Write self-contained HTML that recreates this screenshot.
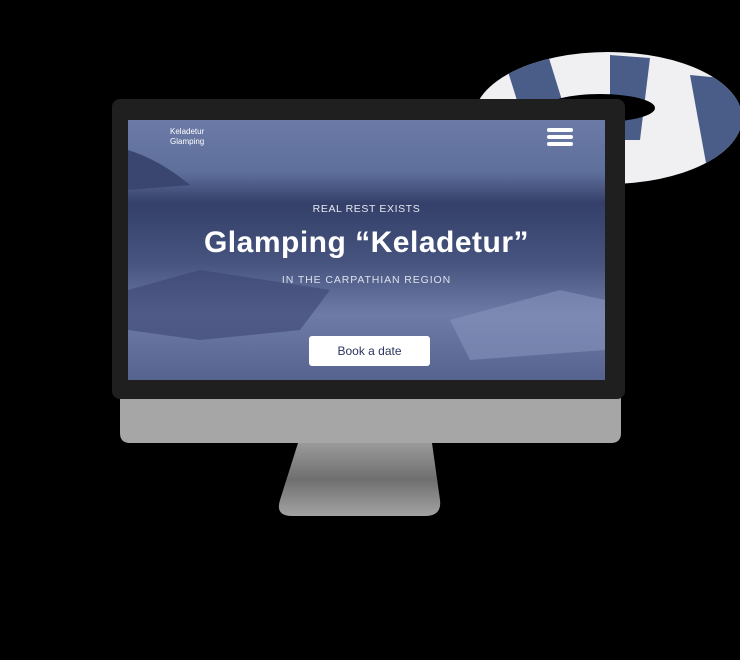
<!DOCTYPE html>
<html><head><style>
body{margin:0;width:740px;height:660px;background:#000;position:relative;overflow:hidden;font-family:"Liberation Sans",sans-serif}
.a{position:absolute}
</style></head><body>
<svg class="a" style="left:0;top:0" width="740" height="660">
  <defs>
    <clipPath id="ring"><ellipse cx="608" cy="118" rx="134" ry="66"/></clipPath>
    <linearGradient id="st" x1="0" y1="0" x2="0" y2="1">
      <stop offset="0" stop-color="#9a9a9a"/><stop offset="0.5" stop-color="#6f6f6f"/><stop offset="1" stop-color="#a3a3a3"/>
    </linearGradient>
    <linearGradient id="sc" x1="0" y1="0" x2="0" y2="1">
      <stop offset="0" stop-color="#6b7aa6"/>
      <stop offset="0.2" stop-color="#5f6f9c"/>
      <stop offset="0.32" stop-color="#344069"/>
      <stop offset="0.55" stop-color="#46547f"/>
      <stop offset="0.75" stop-color="#6d7ba6"/>
      <stop offset="1" stop-color="#56638f"/>
    </linearGradient>
  </defs>
  <g clip-path="url(#ring)">
    <rect x="470" y="50" width="275" height="140" fill="#f0f0f3"/>
    <polygon points="505,62 548,55 565,110 520,110" fill="#4a5c88"/>
    <polygon points="610,55 650,58 640,140 610,140" fill="#4a5c88"/>
    <polygon points="690,75 742,80 742,190 710,185" fill="#4a5c88"/>
  </g>
  <ellipse cx="600" cy="108" rx="55" ry="14" fill="#000"/>
  <path d="M298 443 L432 443 L440 500 Q442 516 425 516 L292 516 Q275 516 280 500 Z" fill="url(#st)"/>
  <path d="M120 398 L621 398 L621 433 Q621 443 611 443 L130 443 Q120 443 120 433 Z" fill="#a6a6a6"/>
  <rect x="112" y="99" width="513" height="300" rx="8" fill="#1f1f1f"/>
  <rect x="128" y="120" width="477" height="260" fill="url(#sc)"/>
  <path d="M128 150 Q160 160 190 185 L128 190 Z" fill="#3b4670"/>
  <path d="M128 290 L200 270 L330 290 L300 330 L200 340 L128 330 Z" fill="#3c4672" opacity="0.6"/>
  <path d="M450 320 L560 290 L605 300 L605 350 L470 360 Z" fill="#8593bc" opacity="0.6"/>
  <rect x="547" y="128" width="26" height="4" rx="2" fill="#fff"/>
  <rect x="547" y="135" width="26" height="4" rx="2" fill="#fff"/>
  <rect x="547" y="142" width="26" height="4" rx="2" fill="#fff"/>
</svg>
<div class="a" style="left:170px;top:127px;color:#fff;font-size:8px;line-height:10px">Keladetur<br>Glamping</div>
<div class="a" style="left:128px;width:477px;top:203px;text-align:center;color:#e6e9f2;font-size:10.5px;letter-spacing:0.6px">REAL REST EXISTS</div>
<div class="a" style="left:128px;width:477px;top:226px;text-align:center;color:#fff;font-size:30px;font-weight:bold;letter-spacing:0.5px">Glamping “Keladetur”</div>
<div class="a" style="left:128px;width:477px;top:274px;text-align:center;color:#dde1ee;font-size:10.5px;letter-spacing:0.9px">IN THE CARPATHIAN REGION</div>
<div class="a" style="left:309px;top:336px;width:121px;height:30px;background:#fff;border-radius:3px;color:#2a3560;font-size:12px;line-height:30px;text-align:center">Book a date</div>
</body></html>
